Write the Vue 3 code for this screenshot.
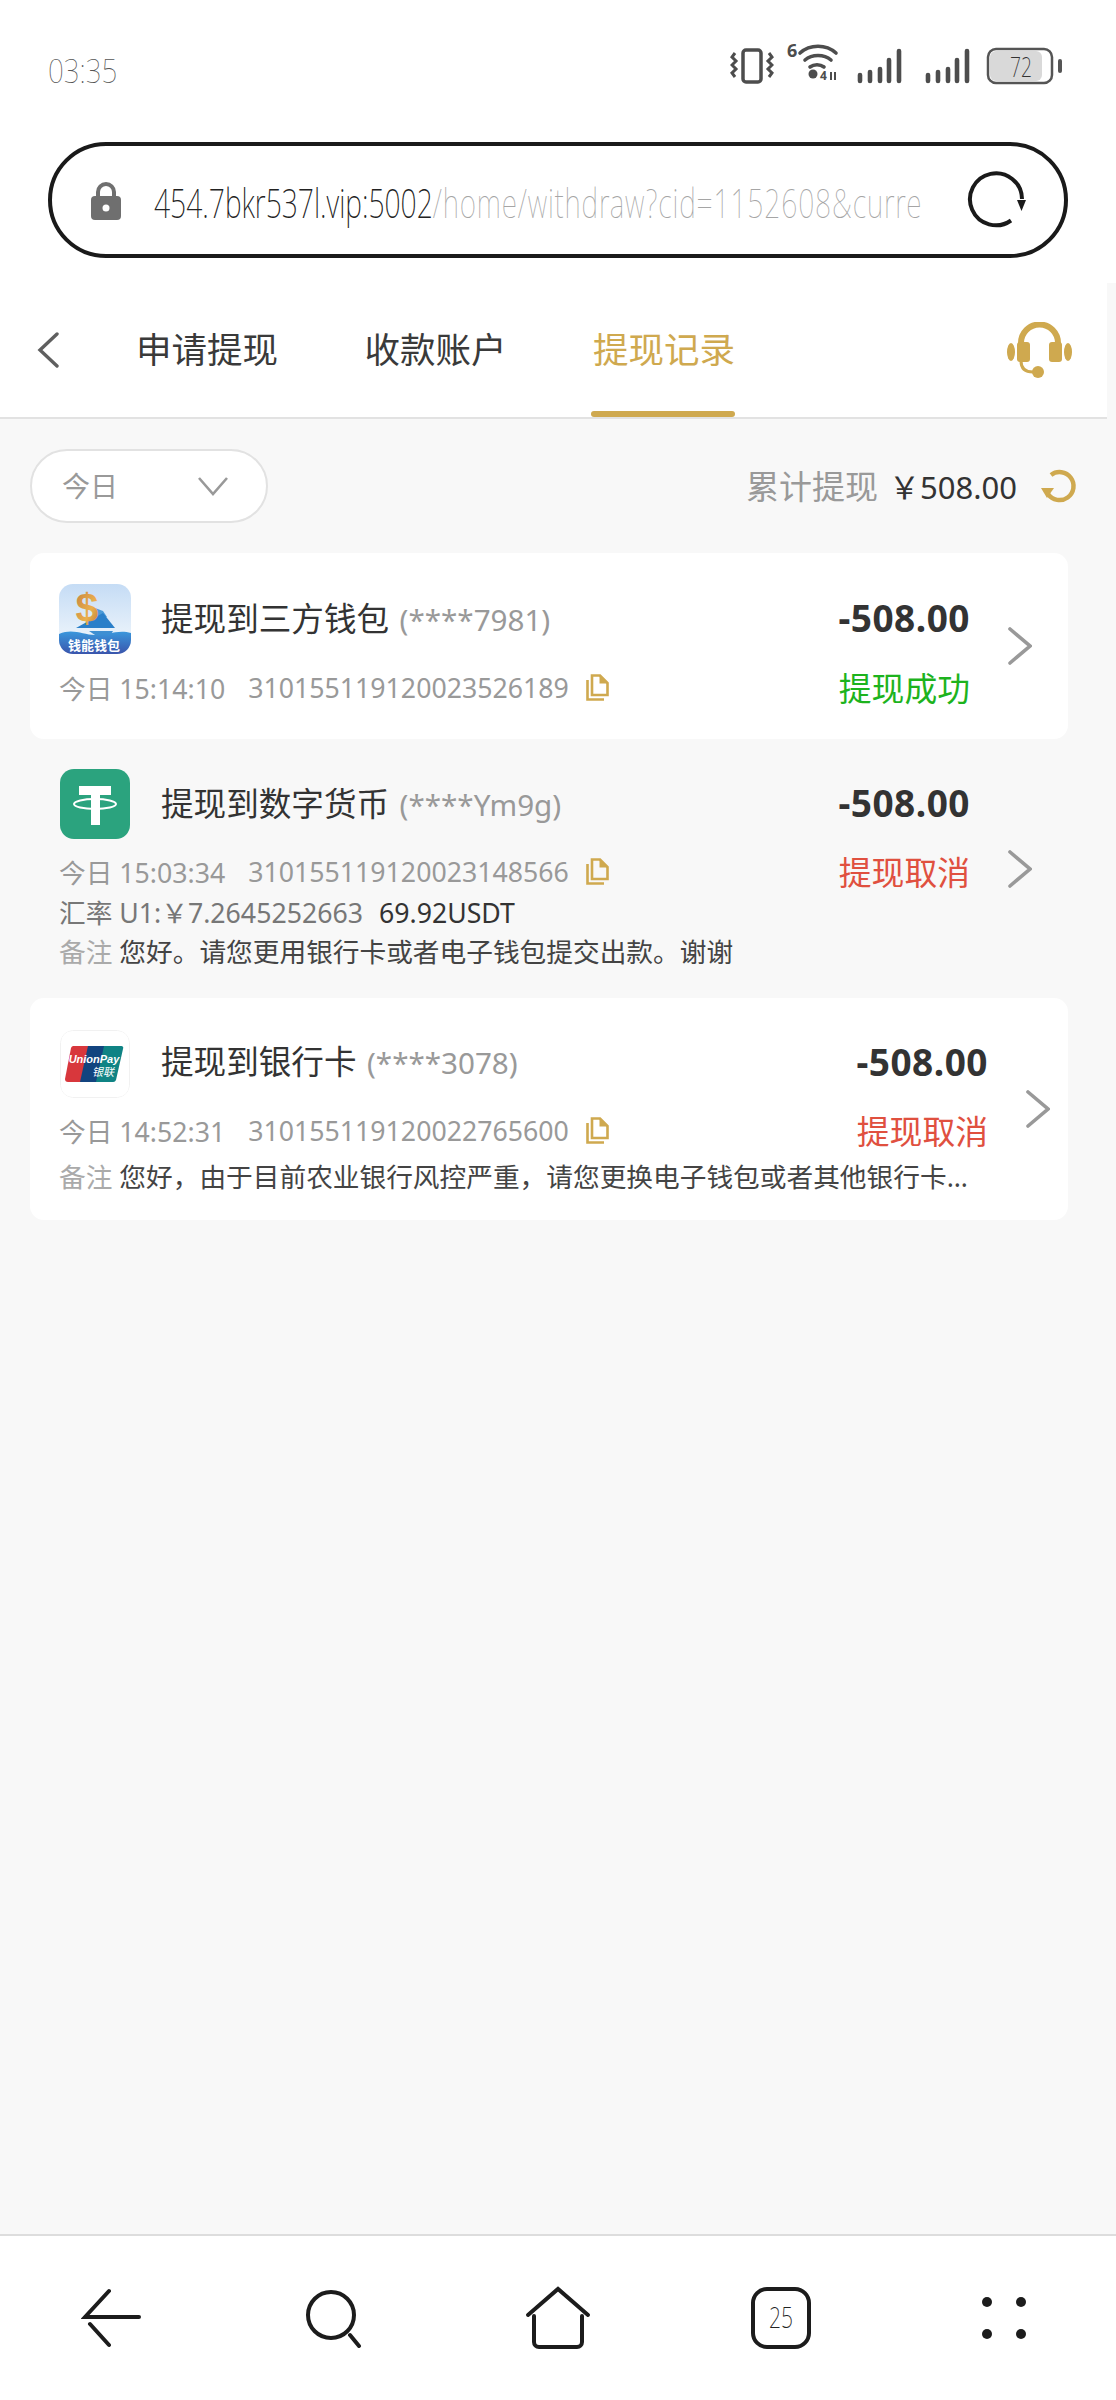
<template>
  <div class="page">
    <div class="status-bar">
      <span class="clock"><span>03:35</span></span>
      <div class="status-icons">
        <svg width="44" height="38" viewBox="0 0 44 38" fill="none" stroke="#4d4d4d">
          <rect x="13" y="3" width="18" height="32" rx="3" stroke-width="3.5" />
          <path d="M5 6l-3 4 4 4-4 4 4 4-4 4 3 4M39 6l3 4-4 4 4 4-4 4 4 4-3 4" stroke-width="3" />
        </svg>
        <svg class="wifi" width="52" height="58" viewBox="0 -10 52 58" fill="none" stroke="#4d4d4d" stroke-width="3.6" stroke-linecap="round">
          <text x="0" y="15" class="wifi-six">6</text>
          <path d="M13 11c10-9 26-9 36 0M18 18c7-6 19-6 26 0M23 25c4-3 10-3 14 0" />
          <circle cx="26" cy="32" r="4.500" fill="#4d4d4d" stroke="none" />
          <text x="33" y="38" class="wifi-four">4</text>
          <path d="M44 30v8M48 30v8" stroke-width="2" stroke-linecap="butt" />
        </svg>
        <svg v-for="n in 2" :key="n" class="signal" width="46" height="36" viewBox="0 0 46 36" stroke="#4d4d4d" stroke-width="4.600" stroke-linecap="round">
          <path d="M3 27v6M13 24v9M23 21v12M32 12v21M42 3v30" />
        </svg>
        <svg class="battery" width="76" height="38" viewBox="0 0 76 38">
          <rect x="2" y="2" width="64" height="34" rx="8" fill="#fff" stroke="#555" stroke-width="2.500" />
          <rect x="4" y="4" width="52" height="30" rx="6" fill="#d9d9d9" />
          <text x="24" y="30" textLength="22" lengthAdjust="spacingAndGlyphs" class="battery-text">72</text>
          <rect x="72" y="12" width="4" height="14" rx="2" fill="#555" />
        </svg>
      </div>
    </div>

    <div class="url-wrap">
      <div class="url-bar">
        <svg class="lock" width="30" height="38" viewBox="0 0 30 38" fill="none">
          <path d="M7 16V10a8 8 0 0 1 16 0v6" stroke="#6f6f6f" stroke-width="4" />
          <rect x="0" y="14" width="30" height="24" rx="4" fill="#6f6f6f" />
          <circle cx="15" cy="26" r="3.500" fill="#fff" />
        </svg>
        <div class="url-clip">
          <span class="url-text"><b>454.7bkr537l.vip:5002</b>/home/withdraw?cid=1152608&amp;curre</span>
        </div>
        <svg class="reload" width="60" height="58" viewBox="0 0 60 58" fill="none">
          <path d="M45 50.500A26 26 0 1 1 56 29" stroke="#1a1a1a" stroke-width="4" />
          <path d="M51 30h9l-4.500 11z" fill="#1a1a1a" />
        </svg>
      </div>
    </div>

    <div class="tabs-wrap">
      <nav class="tabs">
        <svg class="back" width="24" height="36" viewBox="0 0 24 36" fill="none">
          <path d="M21 2L4 18l17 16" stroke="#5f5f5f" stroke-width="3.400" stroke-linecap="round" />
        </svg>
        <a v-for="tab in tabs" :key="tab" class="tab" :class="{ active: tab === '提现记录' }">{{ tab }}</a>
        <svg class="headset" width="65" height="56" viewBox="0 0 65 56" fill="none">
          <path d="M14 26V21a18.500 18.500 0 0 1 37 0v5" stroke="#cfa94f" stroke-width="6" />
          <rect x="10" y="20" width="13" height="20" rx="3" fill="#cfa94f" />
          <rect x="42" y="20" width="13" height="20" rx="3" fill="#cfa94f" />
          <ellipse cx="4" cy="30" rx="4" ry="9" fill="#cfa94f" />
          <ellipse cx="61" cy="30" rx="4" ry="9" fill="#cfa94f" />
          <path d="M14 39c0 8 5 11 12 11" stroke="#cfa94f" stroke-width="3" />
          <circle cx="31" cy="50" r="6" fill="#cfa94f" />
        </svg>
      </nav>
    </div>

    <main class="content">
      <div class="filter-row">
        <div class="date-pill">
          <span>今日</span>
          <svg width="32" height="20" viewBox="0 0 32 20" fill="none">
            <path d="M2 2l14 16L30 2" stroke="#999" stroke-width="2.600" />
          </svg>
        </div>
        <div class="total">
          <span class="total-label">累计提现</span>
          <span class="total-value">￥508.00</span>
          <svg width="38" height="36" viewBox="0 0 38 36" fill="none">
            <path d="M11 7A14 14 0 1 1 8 26" stroke="#cfa94f" stroke-width="4.500" />
            <path d="M1 20h13l-7 10z" fill="#cfa94f" />
          </svg>
        </div>
      </div>

      <div class="records">
        <article v-for="item in records" :key="item.no" class="record" :class="item.kind">
          <div class="record-body">
            <div class="record-top">
              <div class="logo">
                <svg v-if="item.kind === 'wallet'" width="72" height="70" viewBox="0 0 72 70">
                  <defs>
                    <linearGradient id="walletSky" x1="0" y1="0" x2="0" y2="1">
                      <stop offset="0" stop-color="#c5dcf5" />
                      <stop offset="1" stop-color="#f6fafd" />
                    </linearGradient>
                    <linearGradient id="walletSea" x1="0" y1="0" x2="0" y2="1">
                      <stop offset="0" stop-color="#3b97dc" />
                      <stop offset="1" stop-color="#3a55ac" />
                    </linearGradient>
                    <linearGradient id="walletGold" x1="0" y1="0" x2="1" y2="1">
                      <stop offset="0" stop-color="#c5803a" />
                      <stop offset=".6" stop-color="#eab04f" />
                      <stop offset="1" stop-color="#b9762f" />
                    </linearGradient>
                  </defs>
                  <rect width="72" height="70" fill="url(#walletSky)" />
                  <path d="M36 24l8 3 4 6-10 3z" fill="#4a9ad8" />
                  <path d="M17 44l27-15 12 15z" fill="#2a7fc9" />
                  <path d="M30 47h24l-3 5-15-1z" fill="#3f8fd2" />
                  <text x="28" y="38" text-anchor="middle" class="wallet-coin">$</text>
                  <path d="M0 50c14-6 24 1 36 1s24-6 36-2v21H0z" fill="url(#walletSea)" />
                  <text x="35" y="66" text-anchor="middle" class="wallet-name">钱能钱包</text>
                </svg>
                <svg v-else-if="item.kind === 'crypto'" width="70" height="70" viewBox="0 0 70 70">
                  <rect width="70" height="70" fill="#2ba37e" />
                  <path d="M19 17h32v9H40v30h-9V26H19z" fill="#fff" />
                  <ellipse cx="35" cy="35" rx="21" ry="5" fill="none" stroke="#fff" stroke-width="2" />
                </svg>
                <svg v-else width="70" height="68" viewBox="0 0 70 68">
                  <rect x=".5" y=".5" width="69" height="67" rx="12" fill="#fff" stroke="#f1f1f1" />
                  <path d="M13 16h20l-8 36H8a3 3 0 0 1-3-3l6-31a3 3 0 0 1 2-2z" fill="#d8373c" />
                  <path d="M28 16h22l-8 36H20z" fill="#12447f" />
                  <path d="M44 16h17a2 2 0 0 1 2 3l-7 31a3 3 0 0 1-3 2H36z" fill="#0f8384" />
                  <text x="34" y="33" text-anchor="middle" class="up-name">UnionPay</text>
                  <text x="43" y="46" text-anchor="middle" class="up-cn">银联</text>
                </svg>
              </div>
              <h3 class="title">{{ item.title }} <span>({{ item.account }})</span></h3>
              <strong class="amount">-508.00</strong>
            </div>
            <div class="meta">
              <span class="meta-time">{{ item.time }}</span>
              <span class="meta-no">{{ item.no }}</span>
              <svg class="copy" width="23" height="27" viewBox="0 0 23 27" fill="none" stroke="#cfa94f" stroke-width="2.600">
                <path d="M1.500 6v19.500H18" />
                <path d="M6 1.500h8l7.500 7.500v12H6z" />
                <path d="M13.500 1.500l8 8h-8z" fill="#cfa94f" stroke="none" />
              </svg>
              <span class="state" :class="item.stateClass">{{ item.state }}</span>
            </div>
            <div v-if="item.rate" class="rate">
              <span class="rate-label">汇率 U1:￥{{ item.rate }}</span><span class="rate-usdt">{{ item.usdt }}</span>
            </div>
            <div v-if="item.note" class="note"><span>备注</span> {{ item.note }}</div>
          </div>
          <svg class="arrow" width="24" height="38" viewBox="0 0 24 38" fill="none">
            <path d="M2 2l20 17L2 36" stroke="#999" stroke-width="3.600" stroke-linecap="round" />
          </svg>
        </article>
      </div>
    </main>

    <footer class="toolbar">
      <svg width="62" height="60" viewBox="0 0 62 60" fill="none" stroke="#1c1c1c" stroke-width="4" stroke-linecap="round">
        <path d="M58 29H4L28 3M9 36l19 21" />
      </svg>
      <svg width="60" height="60" viewBox="0 0 60 60" fill="none" stroke="#1c1c1c" stroke-width="4" stroke-linecap="round">
        <circle cx="26" cy="27" r="23" />
        <path d="M45 47l9 11" />
      </svg>
      <svg width="66" height="64" viewBox="0 0 66 64" fill="none" stroke="#1c1c1c" stroke-width="4" stroke-linecap="round">
        <path d="M3 29L33 3l30 26" />
        <path d="M9 30v26a5 5 0 0 0 5 5h38a5 5 0 0 0 5-5V30" />
      </svg>
      <svg width="62" height="64" viewBox="0 0 62 64" fill="none">
        <rect x="3" y="3" width="56" height="58" rx="14" stroke="#1c1c1c" stroke-width="4" />
        <text x="19" y="42" textLength="24" lengthAdjust="spacingAndGlyphs" class="tab-count">25</text>
      </svg>
      <svg width="48" height="48" viewBox="0 0 48 48" fill="#1c1c1c">
        <circle cx="7" cy="8" r="5" />
        <circle cx="41" cy="8" r="5" />
        <circle cx="7" cy="40" r="5" />
        <circle cx="41" cy="40" r="5" />
      </svg>
    </footer>
  </div>
</template>

<script setup>
const tabs = ['申请提现', '收款账户', '提现记录']

const records = [
  {
    kind: 'wallet',
    title: '提现到三方钱包',
    account: '****7981',
    time: '今日 15:14:10',
    no: '310155119120023526189',
    state: '提现成功',
    stateClass: 'ok'
  },
  {
    kind: 'crypto',
    title: '提现到数字货币',
    account: '****Ym9g',
    time: '今日 15:03:34',
    no: '310155119120023148566',
    state: '提现取消',
    stateClass: 'cancel',
    rate: '7.2645252663',
    usdt: '69.92USDT',
    note: '您好。请您更用银行卡或者电子钱包提交出款。谢谢'
  },
  {
    kind: 'bank',
    title: '提现到银行卡',
    account: '****3078',
    time: '今日 14:52:31',
    no: '310155119120022765600',
    state: '提现取消',
    stateClass: 'cancel',
    note: '您好，由于目前农业银行风控严重，请您更换电子钱包或者其他银行卡进行提现，谢谢'
  }
]
</script>

<style>
html, body { margin: 0; background: #f8f8f8; }
</style>

<style scoped>
.page {
  width: 1116px;
  min-height: 2400px;
  display: flex;
  flex-direction: column;
  background: #fff;
  color: #333;
  font-family: "Noto Sans", "Noto Sans CJK SC", sans-serif;
}

.status-bar { height: 142px; box-sizing: border-box; display: flex; justify-content: space-between; padding: 48px 54px 0 48px; }
.clock { display: block; width: 70px; height: 46px; color: #555; font-size: 33px; font-weight: 100; line-height: 46px; }
.clock span { display: inline-block; transform: scaleX(.84); transform-origin: left center; }
.status-icons { height: 38px; display: flex; align-items: center; gap: 13px; margin-top: -1px; }
.status-icons .wifi { margin: -10px 5px -10px 0; transform: translateY(-5px); }
.status-icons .signal + .signal { margin-left: 9px; }
.status-icons .battery { margin-left: 2px; }
.wifi-six { font-size: 18px; font-weight: 700; fill: #4d4d4d; stroke: none; }
.wifi-four { font-size: 12px; font-weight: 700; fill: #4d4d4d; stroke: none; }
.battery-text { font-size: 27px; font-weight: 200; fill: #333; }

.url-wrap { padding: 0 48px 25px; }
.url-bar { height: 116px; box-sizing: border-box; display: flex; align-items: center; padding: 0 38px 0 39px; border: 4px solid #1a1a1a; border-radius: 58px; }
.lock { flex: none; margin-top: 2px; }
.url-clip { width: 776px; height: 60px; margin-top: 6px; margin-left: 33px; overflow: hidden; }
.url-text { display: inline-block; color: #a5a5a5; font-size: 40px; font-weight: 100; letter-spacing: 1.2px; line-height: 60px; white-space: nowrap; transform: scaleX(.706); transform-origin: left center; }
.url-text b { color: #222; font-weight: 200; letter-spacing: 0; }
.reload { flex: none; margin-left: auto; margin-top: -2px; }

.tabs-wrap { background: #f8f8f8; }
.tabs { height: 136px; width: 1107px; box-sizing: border-box; display: flex; align-items: stretch; padding-left: 36px; border-bottom: 2px solid #e2e2e2; background: #fff; }
.back { flex: none; align-self: center; margin-right: 76px; }
.tab { position: relative; display: flex; align-items: center; margin-right: 86.500px; padding-bottom: 6px; color: #3a3a3a; font-size: 35.500px; white-space: nowrap; }
.tab.active { color: #cfa94f; }
.tab.active::after { content: ""; position: absolute; left: -2px; right: 0; bottom: 0; height: 6px; border-radius: 3px; background: #cfa94f; }
.headset { flex: none; align-self: center; margin-left: auto; margin-right: 35px; }

.content { flex: 1; background: #f8f8f8; }
.filter-row { display: flex; align-items: center; justify-content: space-between; padding: 30px 38px 30px 30px; }
.date-pill { width: 238px; height: 74px; box-sizing: border-box; display: flex; align-items: center; justify-content: space-between; padding: 0 37px 0 30px; border: 2px solid #e2e2e2; border-radius: 37px; background: #fff; color: #999; font-size: 28px; }
.date-pill span { padding-bottom: 2px; }
.total { display: flex; align-items: center; font-size: 33px; }
.total-label { padding-bottom: 2px; color: #999; }
.total-value { margin: 0 23px 0 11px; padding-bottom: 2px; color: #333; font-size: 31px; }

.records { margin: 0 48px 0 30px; }
.record { display: flex; align-items: center; box-sizing: border-box; padding-left: 29px; border-radius: 14px; }
.record.wallet { height: 186px; padding-right: 36px; background: #fff; }
.record.wallet .record-body { padding-bottom: 3px; }
.record.crypto { height: 259px; padding-right: 36px; }
.record.crypto .record-body { padding-top: 2px; }
.record.crypto .logo svg { margin-left: 1px; }
.record.crypto .meta { margin-top: 14px; }
.record.bank { height: 222px; padding-right: 18px; background: #fff; }
.record.bank .record-body { padding-top: 6px; }
.record.bank .logo svg { margin: 1px 0 0 1px; }
.record.bank .title { margin-bottom: 4px; }
.record.bank .amount { margin-bottom: 5px; }
.record.bank .meta { margin-top: 13px; }
.record.bank .note { margin-top: 11px; }
.record-body { flex: 1; min-width: 0; }
.record-top { display: flex; align-items: center; }
.logo { flex: none; width: 72px; height: 70px; }
.logo svg { display: block; border-radius: 14px; overflow: hidden; }
.wallet-coin { font-family: "Liberation Sans", sans-serif; font-size: 41px; font-weight: 700; fill: url(#walletGold); }
.wallet-name { font-family: "Noto Sans CJK SC", sans-serif; font-size: 13px; font-weight: 700; fill: #fff; }
.up-name { font-family: "Liberation Sans", sans-serif; font-size: 11px; font-style: italic; font-weight: 700; fill: #fff; }
.up-cn { font-family: "Noto Sans CJK SC", sans-serif; font-size: 11px; font-style: italic; fill: #fff; }
.title { flex: 1; margin: 0 0 0 30px; color: #333; font-size: 32.600px; font-weight: 400; line-height: 44px; white-space: nowrap; }
.title span { margin-left: 2px; color: #999; font-size: 29.600px; }
.amount { margin-bottom: 2px; color: #333; font-family: "Noto Sans", sans-serif; font-size: 37px; font-weight: 700; letter-spacing: .5px; line-height: 44px; }
.meta { display: flex; align-items: center; height: 36px; margin-top: 15px; color: #999; font-size: 26.700px; white-space: nowrap; }
.meta-no { margin-left: 23px; }
.copy { flex: none; margin-left: 17px; }
.state { margin-left: auto; font-size: 32.800px; }
.state.ok { color: #1db31d; }
.state.cancel { color: #e0503f; }
.rate { margin-top: 6px; color: #777; font-size: 26.700px; line-height: 36px; white-space: nowrap; }
.rate-usdt { margin-left: 16px; color: #333; }
.note { margin-top: 3px; overflow: hidden; color: #444; font-size: 26.700px; line-height: 36px; text-overflow: ellipsis; white-space: nowrap; }
.note span { color: #aaa; }
.arrow { flex: none; margin-left: 38px; }

.toolbar { height: 166px; box-sizing: border-box; display: grid; grid-template-columns: repeat(5, 1fr); align-items: center; justify-items: center; border-top: 2px solid #ddd; background: #fff; }
.tab-count { font-size: 29px; font-weight: 200; fill: #222; }
</style>
